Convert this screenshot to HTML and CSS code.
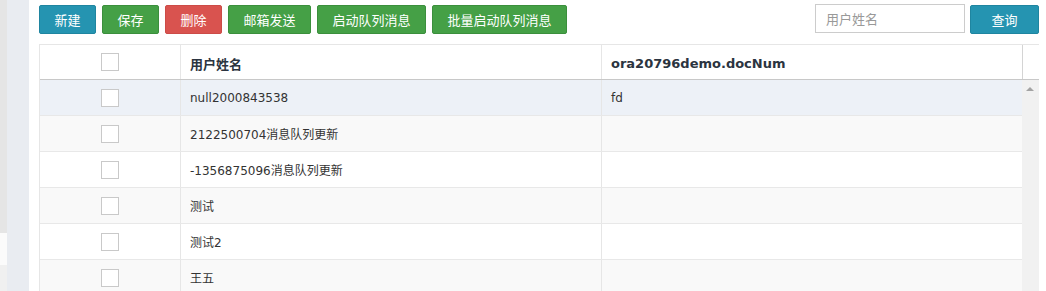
FILE: index.html
```html
<!DOCTYPE html>
<html>
<head>
  <meta charset="UTF-8">
  <title>用户列表</title>
  <link rel="stylesheet" href="styles.css">
</head>
<body>
  <div class="page">
    <div class="side-edge">
      <div class="edge-top"></div>
      <div class="edge-mid"></div>
      <div class="edge-bottom"></div>
    </div>
    <div class="side-strip"></div>
    <div class="main">
      <div class="toolbar">
        <button class="btn btn-info">新建</button>
        <button class="btn btn-success">保存</button>
        <button class="btn btn-danger">删除</button>
        <button class="btn btn-success">邮箱发送</button>
        <button class="btn btn-success">启动队列消息</button>
        <button class="btn btn-success">批量启动队列消息</button>
        <div class="search">
          <input type="text" placeholder="用户姓名">
          <button class="btn btn-info btn-query">查询</button>
        </div>
      </div>
      <div class="grid">
        <div class="grid-head">
          <div class="cell col-check"><span class="check"></span></div>
          <div class="cell col-name">用户姓名</div>
          <div class="cell col-doc">ora20796demo.docNum</div>
          <div class="cell col-gap"></div>
        </div>
        <div class="grid-body">
          <div class="rows">
            <div class="row selected">
              <div class="cell col-check"><span class="check"></span></div>
              <div class="cell col-name">null2000843538</div>
              <div class="cell col-doc">fd</div>
            </div>
            <div class="row odd">
              <div class="cell col-check"><span class="check"></span></div>
              <div class="cell col-name">2122500704消息队列更新</div>
              <div class="cell col-doc"></div>
            </div>
            <div class="row">
              <div class="cell col-check"><span class="check"></span></div>
              <div class="cell col-name">-1356875096消息队列更新</div>
              <div class="cell col-doc"></div>
            </div>
            <div class="row odd">
              <div class="cell col-check"><span class="check"></span></div>
              <div class="cell col-name">测试</div>
              <div class="cell col-doc"></div>
            </div>
            <div class="row">
              <div class="cell col-check"><span class="check"></span></div>
              <div class="cell col-name">测试2</div>
              <div class="cell col-doc"></div>
            </div>
            <div class="row odd">
              <div class="cell col-check"><span class="check"></span></div>
              <div class="cell col-name">王五</div>
              <div class="cell col-doc"></div>
            </div>
          </div>
          <div class="scrollbar"><span class="arrow-up"></span></div>
        </div>
      </div>
    </div>
  </div>
</body>
</html>
```

FILE: styles.css
```css
body {
  margin: 0;
  padding: 0;
  background: #fff;
  font-family: "DejaVu Sans", "Noto Sans CJK SC", sans-serif;
  font-size: 12px;
  color: #333;
  overflow: hidden;
}
.page {
  display: flex;
  height: 291px;
}
.side-edge {
  width: 7px;
  display: flex;
  flex-direction: column;
}
.edge-top {
  height: 233px;
  background: #e5e5e5;
}
.edge-mid {
  height: 32px;
  background: #fbfbfb;
}
.edge-bottom {
  flex: 1;
  background: #f0f0f0;
}
.side-strip {
  width: 22px;
  background: #e9ecf1;
}
.main {
  margin-left: 10px;
  width: 1000px;
}
.toolbar {
  display: flex;
  align-items: center;
  gap: 6px;
  height: 38px;
}
.btn {
  height: 29px;
  padding: 0 14.5px;
  border: 1px solid transparent;
  border-radius: 2px;
  color: #fff;
  font-family: "Noto Sans CJK SC", sans-serif;
  font-size: 13px;
  cursor: pointer;
}
.btn-info {
  background: #2594b1;
  border-color: #1f85a0;
}
.btn-success {
  background: #45a046;
  border-color: #3b8f3c;
}
.btn-danger {
  background: #d9534f;
  border-color: #cc4b47;
}
.search {
  margin-left: auto;
  display: flex;
  gap: 5px;
  align-items: center;
}
.search input {
  width: 128px;
  height: 27px;
  padding: 0 10px;
  margin-top: -1px;
  border: 1px solid #ccc;
  font-family: "Noto Sans CJK SC", sans-serif;
  font-size: 13px;
  color: #555;
}
.search input::placeholder {
  color: #999;
}
.btn-query {
  width: 69px;
  padding: 0;
}
.grid {
  margin-top: 6px;
  border-top: 1px solid #e6e6e6;
  border-left: 1px solid #e6e6e6;
}
.grid-head {
  display: flex;
  height: 34px;
  border-bottom: 1px solid #c8c8c8;
  font-weight: bold;
  font-size: 13px;
  color: #2b3440;
}
.cell {
  display: flex;
  align-items: center;
  box-sizing: border-box;
}
.col-check {
  width: 141px;
  justify-content: center;
  border-right: 1px solid #e6e6e6;
}
.col-name {
  width: 421px;
  padding-left: 9px;
  border-right: 1px solid #e6e6e6;
}
.col-doc {
  width: 420px;
  padding-left: 9px;
}
.col-gap {
  width: 17px;
  border-left: 1px solid #d4d4d4;
}
.grid-head .col-name,
.grid-head .col-doc {
  padding-top: 2px;
}
.check {
  display: block;
  width: 16px;
  height: 16px;
  border: 1px solid #c9c9c9;
  background: #fff;
}
.grid-body {
  display: flex;
}
.rows {
  width: 982px;
}
.row {
  display: flex;
  height: 35px;
  border-bottom: 1px solid #e8e8e8;
  background: #fff;
}
.row.odd {
  background: #f9f9f9;
}
.row.selected {
  background: #edf1f7;
}
.scrollbar {
  width: 17px;
  height: 220px;
  background: #f1f1f1;
  position: relative;
}
.arrow-up {
  position: absolute;
  left: 4px;
  top: 7px;
  width: 0;
  height: 0;
  border-left: 4px solid transparent;
  border-right: 4px solid transparent;
  border-bottom: 4px solid #a3a3a3;
}
```
